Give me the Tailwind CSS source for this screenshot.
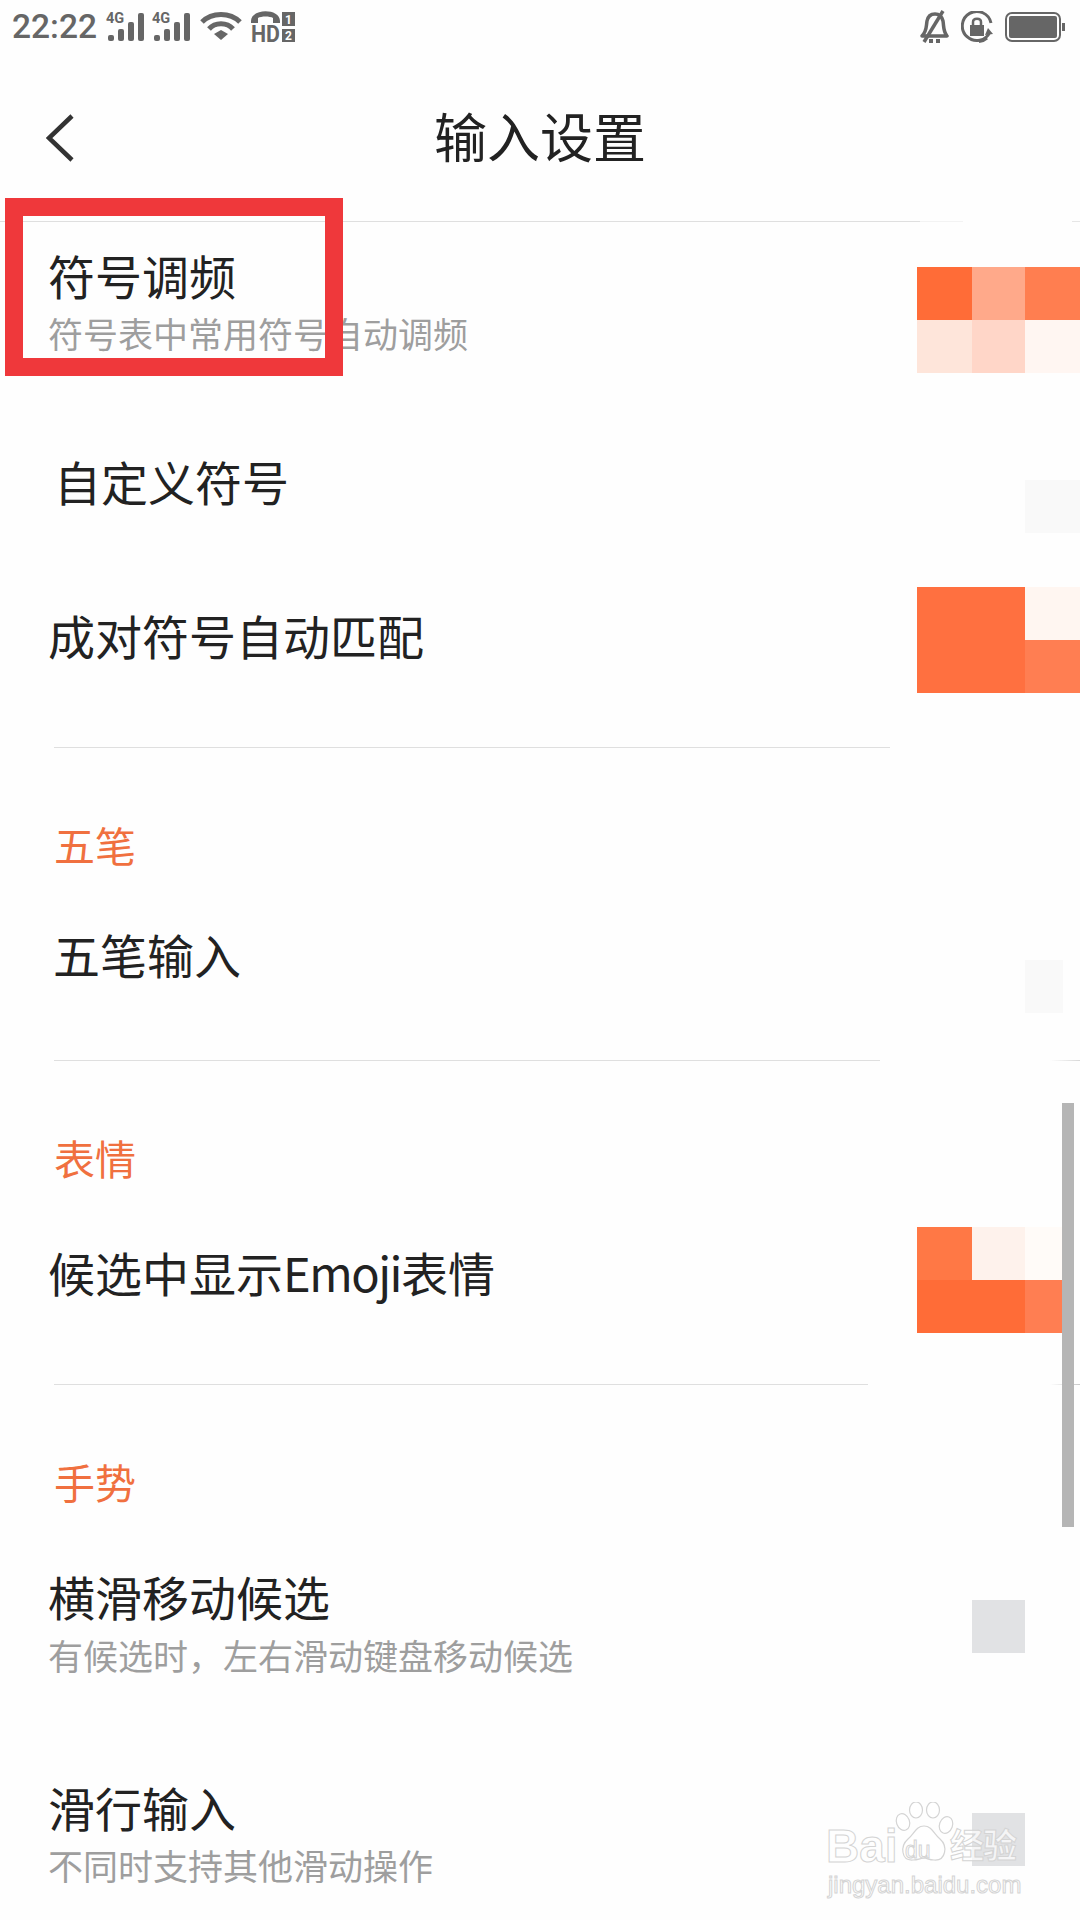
<!DOCTYPE html>
<html lang="zh-CN">
<head>
  <meta charset="UTF-8" />
  <meta name="viewport" content="width=device-width, initial-scale=1.0" />
  <title>输入设置</title>
  <script src="https://cdn.jsdelivr.net/npm/@tailwindcss/browser@4"></script>
</head>
<body class="bg-[#fefefe] font-['Noto_Sans_CJK_SC','Noto_Sans',sans-serif]">
  <div class="relative w-[1080px] h-[1920px] overflow-hidden bg-[#fefefe] text-[#222222]">

    <!-- Status bar -->
    <div class="relative h-[54px] flex items-center text-[#666666]">
      <span class="ml-[12px] w-[94px] font-['Roboto',sans-serif] font-medium text-[33.5px] leading-[54px]">22:22</span>
      <svg class="w-[40px] h-[32px] mt-[-1px] overflow-visible" viewBox="0 0 40 32" fill="currentColor">
        <text x="0" y="12" font-family="Roboto,sans-serif" font-size="14.5" font-weight="700">4G</text>
        <rect x="2" y="24" width="6" height="6" rx="2" /><rect x="12" y="18" width="6" height="12" rx="2" /><rect x="22" y="11" width="6" height="19" rx="2" /><rect x="32" y="2" width="6" height="28" rx="2" />
      </svg>
      <svg class="ml-[6px] w-[40px] h-[32px] mt-[-1px] overflow-visible" viewBox="0 0 40 32" fill="currentColor">
        <text x="0" y="12" font-family="Roboto,sans-serif" font-size="14.5" font-weight="700">4G</text>
        <rect x="2" y="24" width="6" height="6" rx="2" /><rect x="12" y="18" width="6" height="12" rx="2" /><rect x="22" y="11" width="6" height="19" rx="2" /><rect x="32" y="2" width="6" height="28" rx="2" />
      </svg>
      <svg class="ml-[8px] w-[42px] h-[28px] mt-[-2px]" viewBox="0 0 42 28" fill="none" stroke="currentColor" stroke-width="5">
        <path d="M2 10C12 0 30 0 40 10" /><path d="M9 17C15 10 27 10 33 17" />
        <path d="M14 22L21 18L28 22L21 28Z" fill="currentColor" stroke="none" />
      </svg>
      <svg class="ml-[8px] w-[46px] h-[34px] overflow-visible" viewBox="0 0 46 34" fill="currentColor">
        <path d="M1 11C1 -2 30 -2 30 11L30 13L23 13L23 8C20 6 11 6 8 8L8 13L1 13Z" />
        <text x="1" y="32" font-family="Roboto,sans-serif" font-size="23" font-weight="700" textLength="29" lengthAdjust="spacingAndGlyphs">HD</text>
        <rect x="32" y="2" width="13" height="14" /><rect x="32" y="19" width="13" height="13" />
        <text x="38.5" y="14" text-anchor="middle" font-family="Roboto,sans-serif" font-size="12" font-weight="700" fill="#fefefe">1</text>
        <text x="38.5" y="30" text-anchor="middle" font-family="Roboto,sans-serif" font-size="12" font-weight="700" fill="#fefefe">2</text>
      </svg>
      <div class="ml-auto flex items-center gap-[12px] mr-[15px]">
        <svg class="w-[30px] h-[34px]" viewBox="0 0 30 34" fill="none" stroke="currentColor" stroke-width="3.5">
          <path d="M3 26C8 21 7 17 8 11C9 6 12 4 16 4C20 4 23 7 24 11C25 17 24 21 28 26Z" stroke-linejoin="round" />
          <path d="M5 32L24 1" /><path d="M12 29L12 33M19 29L19 33" stroke-width="4" />
        </svg>
        <svg class="w-[32px] h-[32px]" viewBox="0 0 32 32" fill="none" stroke="currentColor" stroke-width="3">
          <path d="M29 21A14.5 14.5 0 1 1 30 12" /><path d="M26 27A14.5 14.5 0 0 1 18 30.5" />
          <path d="M27 17L32 23L24 24Z" fill="currentColor" stroke="none" />
          <rect x="9" y="14" width="14" height="11" fill="currentColor" stroke="none" />
          <path d="M12 14V11C12 6.5 20 6.5 20 11V14" stroke-width="2.5" />
        </svg>
        <svg class="w-[60px] h-[30px]" viewBox="0 0 60 30" fill="none">
          <rect x="1" y="1" width="54" height="28" rx="6" stroke="currentColor" stroke-width="2" />
          <rect x="4" y="4" width="48" height="22" rx="2" fill="currentColor" />
          <rect x="57" y="11" width="3" height="8" fill="currentColor" />
        </svg>
      </div>
    </div>

    <!-- Title bar -->
    <div class="relative h-[167px] flex items-center justify-center">
      <svg class="absolute left-[46px] top-[60px] w-[28px] h-[48px]" viewBox="0 0 28 48" fill="none" stroke="#333333" stroke-width="4.5">
        <path d="M26 2L3 24L26 46" />
      </svg>
      <h1 class="text-[53px] leading-[60px] mt-[-5px] font-normal">输入设置</h1>
    </div>
    <div class="flex h-[1px]">
      <div class="w-[920px] bg-[#dfdfdf]"></div>
      <div class="w-[43px] bg-[#f3f3f3]"></div>
      <div class="ml-auto w-[8px] bg-[#e6e6e6]"></div>
    </div>

    <!-- 符号 -->
    <div class="flex items-start h-[196px] pl-[48px] pt-[23px]">
      <div>
        <div class="text-[47px] leading-[60px]">符号调频</div>
        <div class="text-[35px] leading-[50px] mt-[3px] text-[#9e9e9e]">符号表中常用符号自动调频</div>
      </div>
      <div class="ml-auto mt-[22px] grid grid-cols-[55px_53px_55px] grid-rows-[53px_53px]">
        <div class="bg-[#ff6c37]"></div><div class="bg-[#ffa98a]"></div><div class="bg-[#ff7e50]"></div>
        <div class="bg-[#fee5da]"></div><div class="bg-[#ffd6c8]"></div><div class="bg-[#fff6f2]"></div>
      </div>
    </div>
    <div class="flex items-start h-[136px] pl-[54px] pt-[33px]">
      <div class="text-[47px] leading-[60px]">自定义符号</div>
      <div class="ml-auto mt-[29px] w-[55px] h-[53px] bg-[#f9f9f9]"></div>
    </div>
    <div class="flex items-start h-[193px] pl-[48px] pt-[51px]">
      <div class="text-[47px] leading-[60px]">成对符号自动匹配</div>
      <div class="ml-auto mt-[-18px] grid grid-cols-[55px_53px_55px] grid-rows-[53px_53px]">
        <div class="bg-[#ff7040]"></div><div class="bg-[#ff7040]"></div><div class="bg-[#fff6f1]"></div>
        <div class="bg-[#ff7040]"></div><div class="bg-[#ff7040]"></div><div class="bg-[#ff7e52]"></div>
      </div>
    </div>
    <div class="ml-[54px] w-[836px] h-[1px] bg-[#dfdfdf]"></div>

    <!-- 五笔 -->
    <div class="h-[153px] pl-[54px] pt-[71px] text-[41px] leading-[50px] text-[#f0703f]">五笔</div>
    <div class="flex items-start h-[159px] pl-[53px] pt-[23px]">
      <div class="text-[47px] leading-[60px]">五笔输入</div>
      <div class="ml-auto mr-[17px] mt-[36px] w-[38px] h-[53px] bg-[#f9f9f9]"></div>
    </div>
    <div class="flex h-[1px]">
      <div class="ml-[54px] w-[826px] bg-[#dfdfdf]"></div>
      <div class="ml-auto w-[30px] bg-gradient-to-r from-[#fefefe] to-[#d8d8d8]"></div>
    </div>

    <!-- 表情 -->
    <div class="h-[122px] pl-[54px] pt-[71px] text-[41px] leading-[50px] text-[#f0703f]">表情</div>
    <div class="flex items-start h-[202px] pl-[48px] pt-[59px]">
      <div class="text-[47px] leading-[60px]">候选中显示<span class="tracking-[-1.5px]">Emoji</span>表情</div>
      <div class="ml-auto mr-[17px] mt-[-15px] grid grid-cols-[55px_53px_38px] grid-rows-[53px_53px]">
        <div class="bg-[#ff7845]"></div><div class="bg-[#fef2ec]"></div><div class="bg-[#fffbf8]"></div>
        <div class="bg-[#ff6c37]"></div><div class="bg-[#ff6c37]"></div><div class="bg-[#ff7e52]"></div>
      </div>
    </div>
    <div class="flex h-[1px] mt-[-1px] mb-[1px]">
      <div class="ml-[54px] w-[814px] bg-[#dfdfdf]"></div>
      <div class="ml-auto w-[30px] bg-gradient-to-r from-[#fefefe] to-[#c9c9c9]"></div>
    </div>

    <!-- 手势 -->
    <div class="h-[123px] pl-[54px] pt-[70px] text-[41px] leading-[50px] text-[#f0703f]">手势</div>
    <div class="flex items-start h-[211px] pl-[48px] pt-[57px]">
      <div>
        <div class="text-[47px] leading-[60px]">横滑移动候选</div>
        <div class="text-[35px] leading-[50px] mt-[4px] text-[#9e9e9e]">有候选时，左右滑动键盘移动候选</div>
      </div>
      <div class="ml-auto mr-[55px] mt-[34px] w-[53px] h-[53px] bg-[#e1e2e4]"></div>
    </div>
    <div class="flex items-start h-[200px] pl-[48px] pt-[57px]">
      <div>
        <div class="text-[47px] leading-[60px]">滑行输入</div>
        <div class="text-[35px] leading-[50px] mt-[3px] text-[#9e9e9e]">不同时支持其他滑动操作</div>
      </div>
      <div class="ml-auto mr-[55px] mt-[36px] w-[53px] h-[53px] bg-[#e1e2e4]"></div>
    </div>

    <!-- Red annotation box -->
    <div class="absolute left-[5px] top-[198px] w-[338px] h-[178px] border-[18px] border-[#ef383b]"></div>

    <!-- Scrollbar -->
    <div class="absolute left-[1062px] top-[1103px] w-[12px] h-[424px] bg-[#b5b5b5]"></div>

    <!-- Watermark -->
    <div class="absolute left-[826px] top-[1802px] w-[200px] h-[100px] text-white/70 [-webkit-text-stroke:1px_#d4d4d4]">
      <div class="absolute left-0 top-[18px] font-['Liberation_Sans',sans-serif] font-bold text-[46px] leading-[52px]">Bai</div>
      <svg class="absolute left-[68px] top-0 w-[62px] h-[66px]" viewBox="0 0 62 66" fill="#ffffffb0" stroke="#d4d4d4" stroke-width="1.2">
        <ellipse cx="9" cy="20" rx="6.5" ry="8.5" transform="rotate(-20 9 20)" /><ellipse cx="22" cy="8" rx="6.5" ry="8" /><ellipse cx="39" cy="8" rx="6.5" ry="8" /><ellipse cx="52" cy="23" rx="6.5" ry="8.5" transform="rotate(20 52 23)" />
        <path d="M30 24C38 24 40 32 46 37C54 44 52 59 40 58C35 58 33 56 30 56C27 56 24 58 19 58C7 59 6 44 14 37C20 32 22 24 30 24Z" />
      </svg>
      <div class="absolute left-[79px] top-[35px] font-['Liberation_Sans',sans-serif] text-[23px] leading-[26px]">du</div>
      <div class="absolute left-[124px] top-[20px] font-bold text-[34px] leading-[44px] whitespace-nowrap tracking-[-1px]">经验</div>
      <div class="absolute left-[2px] top-[68px] font-['Liberation_Sans',sans-serif] text-[24px] leading-[30px] whitespace-nowrap">jingyan.baidu.com</div>
    </div>
  </div>
</body>
</html>
